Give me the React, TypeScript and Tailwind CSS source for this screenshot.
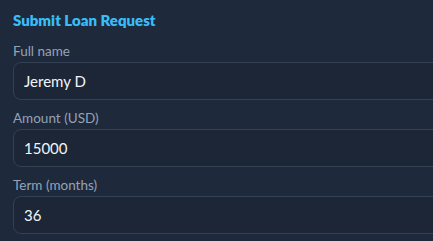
export default function App() {
  const fields = [
    { label: 'Full name', value: 'Jeremy D' },
    { label: 'Amount (USD)', value: '15000' },
    { label: 'Term (months)', value: '36' },
  ];

  return (
    <main
      className="h-[241px] w-[433px] overflow-hidden bg-[#1e293b] pl-[13px] pt-[10px]"
      style={{ fontFamily: 'Lato, "Noto Sans", sans-serif' }}
    >
      <h2 className="text-[15px] font-extrabold leading-5 text-[#38bdf8]">Submit Loan Request</h2>

      <div className="mt-[12px] flex w-[480px] flex-col gap-[9px]">
        {fields.map((f) => (
          <label key={f.label} className="flex flex-col gap-[2px]">
            <span className="text-[13.5px] leading-[18px] text-[#94a3b8]">{f.label}</span>
            <input
              readOnly
              value={f.value}
              className="h-[38px] rounded-lg border border-[#334155] bg-[#1c2636] px-[10px] text-[15px] text-[#f1f5f9] outline-none"
            />
          </label>
        ))}
      </div>
    </main>
  );
}
